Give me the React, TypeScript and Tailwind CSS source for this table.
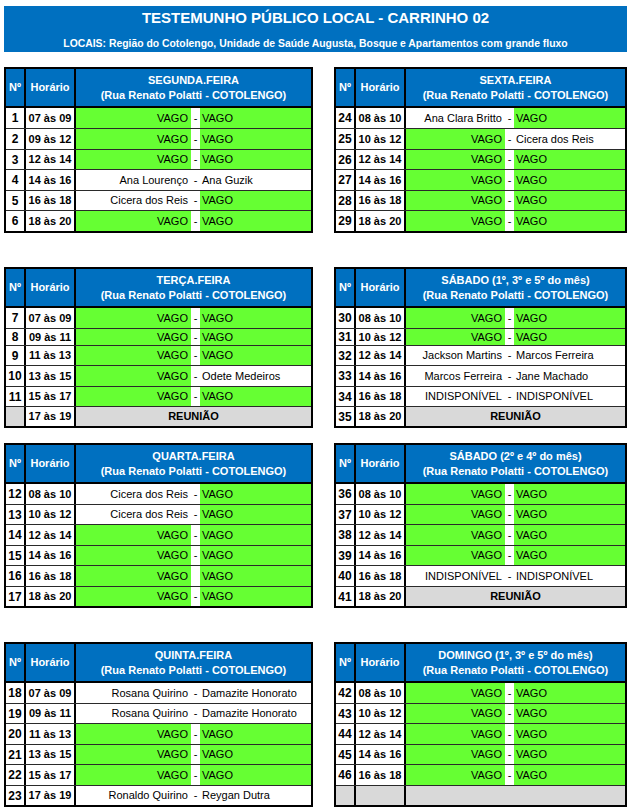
import React from 'react'

type Row = {
  n: string
  h: string
  a?: string
  b?: string
  noDash?: boolean
  kind?: 'meet' | 'blank'
}

type Day = {
  title: string
  rows: Row[]
}

const vv = (n: string, h: string): Row => ({ n, h, a: 'VAGO', b: 'VAGO' })

const segunda: Day = {
  title: 'SEGUNDA.FEIRA',
  rows: [
    vv('1', '07 às 09'),
    vv('2', '09 às 12'),
    vv('3', '12 às 14'),
    { n: '4', h: '14 às 16', a: 'Ana Lourenço', b: 'Ana Guzik' },
    { n: '5', h: '16 às 18', a: 'Cicera dos Reis', b: 'VAGO' },
    vv('6', '18 às 20'),
  ],
}

const sexta: Day = {
  title: 'SEXTA.FEIRA',
  rows: [
    { n: '24', h: '08 às 10', a: 'Ana Clara Britto', b: 'VAGO' },
    { n: '25', h: '10 às 12', a: 'VAGO', b: 'Cicera dos Reis' },
    vv('26', '12 às 14'),
    vv('27', '14 às 16'),
    vv('28', '16 às 18'),
    vv('29', '18 às 20'),
  ],
}

const terca: Day = {
  title: 'TERÇA.FEIRA',
  rows: [
    vv('7', '07 às 09'),
    vv('8', '09 às 11'),
    vv('9', '11 às 13'),
    { n: '10', h: '13 às 15', a: 'VAGO', b: 'Odete Medeiros' },
    vv('11', '15 às 17'),
    { n: '', h: '17 às 19', kind: 'meet' },
  ],
}

const sabado1: Day = {
  title: 'SÁBADO (1º, 3º e 5º do mês)',
  rows: [
    vv('30', '08 às 10'),
    vv('31', '10 às 12'),
    { n: '32', h: '12 às 14', a: 'Jackson Martins', b: 'Marcos Ferreira' },
    { n: '33', h: '14 às 16', a: 'Marcos Ferreira', b: 'Jane Machado' },
    { n: '34', h: '16 às 18', a: 'INDISPONÍVEL', b: 'INDISPONÍVEL' },
    { n: '35', h: '18 às 20', kind: 'meet' },
  ],
}

const quarta: Day = {
  title: 'QUARTA.FEIRA',
  rows: [
    { n: '12', h: '08 às 10', a: 'Cicera dos Reis', b: 'VAGO' },
    { n: '13', h: '10 às 12', a: 'Cicera dos Reis', b: 'VAGO' },
    vv('14', '12 às 14'),
    vv('15', '14 às 16'),
    { n: '16', h: '16 às 18', a: 'VAGO', b: 'VAGO', noDash: true },
    vv('17', '18 às 20'),
  ],
}

const sabado2: Day = {
  title: 'SÁBADO (2º e 4º do mês)',
  rows: [
    vv('36', '08 às 10'),
    vv('37', '10 às 12'),
    vv('38', '12 às 14'),
    vv('39', '14 às 16'),
    { n: '40', h: '16 às 18', a: 'INDISPONÍVEL', b: 'INDISPONÍVEL' },
    { n: '41', h: '18 às 20', kind: 'meet' },
  ],
}

const quinta: Day = {
  title: 'QUINTA.FEIRA',
  rows: [
    { n: '18', h: '07 às 09', a: 'Rosana Quirino', b: 'Damazite Honorato' },
    { n: '19', h: '09 às 11', a: 'Rosana Quirino', b: 'Damazite Honorato' },
    vv('20', '11 às 13'),
    vv('21', '13 às 15'),
    vv('22', '15 às 17'),
    { n: '23', h: '17 às 19', a: 'Ronaldo Quirino', b: 'Reygan Dutra' },
  ],
}

const domingo: Day = {
  title: 'DOMINGO (1º, 3º e 5º do mês)',
  rows: [
    vv('42', '08 às 10'),
    vv('43', '10 às 12'),
    vv('44', '12 às 14'),
    vv('45', '14 às 16'),
    vv('46', '16 às 18'),
    { n: '', h: '', kind: 'blank' },
  ],
}

// row heights (first row has no top line)
const h1 = ['h-[20px]', 'h-[21px]', 'h-[20px]', 'h-[21px]', 'h-[20px]', 'h-[21px]']
const h2 = ['h-[20px]', 'h-[17px]', 'h-[20px]', 'h-[21px]', 'h-[20px]', 'h-[20px]']
const h3 = ['h-[20px]', 'h-[20px]', 'h-[21px]', 'h-[20px]', 'h-[21px]', 'h-[20px]']

const green = (t?: string) => (t === 'VAGO' ? 'bg-[#66ff33]' : 'bg-white')

function DayTable({ day, heights, wide }: { day: Day; heights: string[]; wide: boolean }) {
  return (
    <div className={`${wide ? 'w-[309px]' : 'w-[293px]'} border-2 border-black text-black`}>
      <div className="flex h-[39px] border-b-2 border-black bg-[#0070c0] text-white font-bold text-[11px]">
        <div className="w-[20px] border-r-2 border-black flex items-center justify-center">Nº</div>
        <div className="w-[50px] border-r-2 border-black flex items-center justify-center">Horário</div>
        <div className="flex-1 flex flex-col items-center justify-center leading-[15px]">
          <span>{day.title}</span>
          <span>(Rua Renato Polatti - COTOLENGO)</span>
        </div>
      </div>
      {day.rows.map((r, i) => (
        <div
          key={i}
          className={`flex ${heights[i]} ${i > 0 ? 'border-t border-[#2a2a2a]' : ''}`}
        >
          <div
            className={`w-[20px] border-r-2 border-black flex items-center justify-center font-bold text-[12px] ${r.n === '' ? 'bg-[#d9d9d9]' : ''}`}
          >
            {r.n}
          </div>
          <div
            className={`w-[50px] border-r-2 border-black flex items-center justify-center font-bold text-[11px] ${r.h === '' ? 'bg-[#d9d9d9]' : ''}`}
          >
            {r.h}
          </div>
          {r.kind === 'meet' ? (
            <div className="flex-1 bg-[#d9d9d9] flex items-center justify-center font-bold text-[11px]">REUNIÃO</div>
          ) : r.kind === 'blank' ? (
            <div className="flex-1 bg-[#d9d9d9]" />
          ) : (
            <div className="flex-1 flex text-[11px]">
              <div className={`${wide ? 'w-[115px]' : 'w-[99px]'} ${green(r.a)} flex items-center justify-end pr-[3px] whitespace-nowrap`}>
                {r.a}
              </div>
              <div className="w-[9px] bg-white flex items-center justify-center">{r.noDash ? '' : '-'}</div>
              <div className={`flex-1 ${green(r.b)} flex items-center pl-[2px] whitespace-nowrap`}>{r.b}</div>
            </div>
          )}
        </div>
      ))}
    </div>
  )
}

export default function App() {
  return (
    <div className="w-[632px] h-[808px] overflow-hidden bg-white font-['Liberation_Sans',Arial,sans-serif]">
      <div className="ml-[4px] mt-[6px] w-[623px] h-[46px] bg-[#0070c0] text-white font-bold flex flex-col items-center">
        <div className="pt-[2px] text-[15px] leading-[20px]">TESTEMUNHO PÚBLICO LOCAL - CARRINHO 02</div>
        <div className="mt-[9px] text-[10.4px] leading-[14px]">
          LOCAIS: Região do Cotolengo, Unidade de Saúde Augusta, Bosque e Apartamentos com grande fluxo
        </div>
      </div>

      <div className="ml-[4px] mt-[15px] flex gap-[21px]">
        <DayTable day={segunda} heights={h1} wide />
        <DayTable day={sexta} heights={h1} wide={false} />
      </div>
      <div className="ml-[4px] mt-[34px] flex gap-[21px]">
        <DayTable day={terca} heights={h2} wide />
        <DayTable day={sabado1} heights={h2} wide={false} />
      </div>
      <div className="ml-[4px] mt-[15px] flex gap-[21px]">
        <DayTable day={quarta} heights={h3} wide />
        <DayTable day={sabado2} heights={h3} wide={false} />
      </div>
      <div className="ml-[4px] mt-[34px] flex gap-[21px]">
        <DayTable day={quinta} heights={h3} wide />
        <DayTable day={domingo} heights={h3} wide={false} />
      </div>
    </div>
  )
}
